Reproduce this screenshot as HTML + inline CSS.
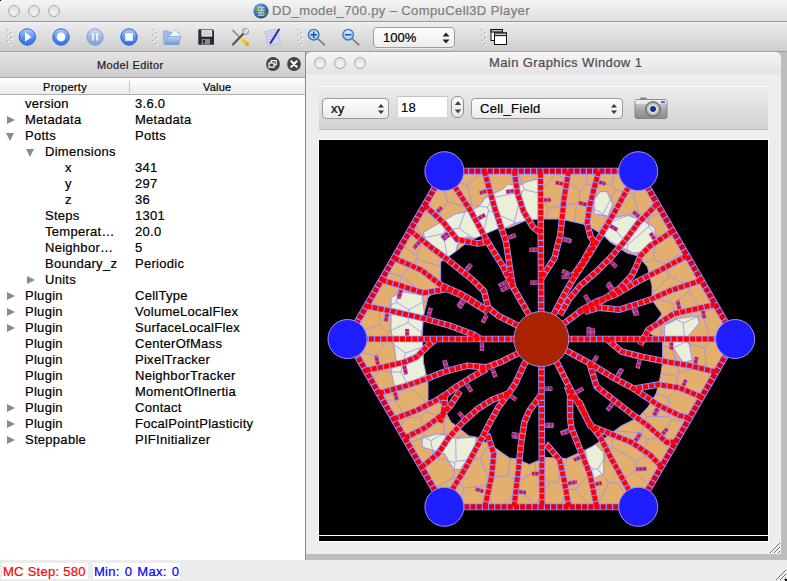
<!DOCTYPE html>
<html><head><meta charset="utf-8">
<style>
*{margin:0;padding:0;box-sizing:border-box}
html,body{width:787px;height:581px;overflow:hidden;background:#ececec;font-family:"Liberation Sans",sans-serif;position:relative}
.a{position:absolute}
.t{position:absolute;white-space:nowrap;font-size:13px;letter-spacing:0.28px;color:#000;line-height:16px;-webkit-text-stroke:0.2px currentColor}
#title{left:0;top:0;width:787px;height:22px;background:linear-gradient(#f4f4f4,#dedede);border-bottom:1px solid #989898}
.tl{position:absolute;width:12px;height:12px;border-radius:50%;border:1px solid #a9a9a9;background:radial-gradient(circle at 50% 70%,#f4f4f4,#dcdcdc)}
#tb{left:0;top:22px;width:787px;height:30px;background:linear-gradient(#ececec,#cdcdcd);border-top:1px solid #f4f4f4;border-bottom:1px solid #a0a0a0}
#dockh{left:0;top:52px;width:305px;height:26px;background:linear-gradient(#e5e5e5,#cdcdcd);border-bottom:1px solid #a8a8a8}
#colh{left:0;top:78px;width:305px;height:17px;background:linear-gradient(#ffffff,#ebebeb);border-bottom:1px solid #b0b0b0}
#tree{left:0;top:95px;width:305px;height:465px;background:#fff}
#vsep{left:305px;top:52px;width:1px;height:508px;background:#8a8a8a}
#mdi{left:306px;top:52px;width:481px;height:508px;background:#bdbdbd}
#sub{left:306px;top:52px;width:475px;height:502px;background:#ededed;border-radius:6px 6px 0 0}
#subt{left:0;top:0;width:475px;height:22px;background:linear-gradient(#f6f6f6,#e3e3e3);border-radius:6px 6px 0 0}
#panel{left:13px;top:34px;width:449px;height:44px;background:linear-gradient(#ececec,#d2d2d2);border-top:1px solid #fafafa;border-bottom:1px solid #bdbdbd}
#status{left:0;top:560px;width:787px;height:21px;background:#ececec}
.tri{position:absolute;width:0;height:0}
.tr{border-left:8px solid #8b8b8b;border-top:4.5px solid transparent;border-bottom:4.5px solid transparent}
.td{border-top:8px solid #8b8b8b;border-left:4.5px solid transparent;border-right:4.5px solid transparent}
</style></head><body>
<div id="title" class="a">
  <div class="tl" style="left:8px;top:5px"></div>
  <div class="tl" style="left:28px;top:5px"></div>
  <div class="tl" style="left:48px;top:5px"></div>
  <svg class="a" style="left:253px;top:3px" width="16" height="16" viewBox="0 0 16 16"><defs><radialGradient id="gg" cx="40%" cy="35%" r="70%"><stop offset="0" stop-color="#9fd0e8"/><stop offset="0.5" stop-color="#3f7fb0"/><stop offset="1" stop-color="#1d4a78"/></radialGradient></defs><circle cx="8" cy="8" r="7.6" fill="url(#gg)"/><path d="M3 5 q3 -2 5 0 q2 3 -1 5 q-3 1 -4 -2z M10 9 q3 -1 4 2 q-2 3 -4 1z" fill="#5a9a50" opacity="0.8"/><text x="8" y="8" font-size="5" fill="#fff" text-anchor="middle" font-family="Liberation Sans">CC</text><text x="8" y="13" font-size="5" fill="#fff" text-anchor="middle" font-family="Liberation Sans">3D</text></svg>
  <div class="t" style="left:272px;top:3px;color:#7b7b7b;letter-spacing:0.4px">DD_model_700.py – CompuCell3D Player</div>
</div>
<div id="tb" class="a"></div>
<!--TB-->
<svg class="a" style="left:0;top:22px" width="787" height="30" viewBox="0 22 787 30">
<defs>
<linearGradient id="gb" x1="0" y1="0" x2="0" y2="1"><stop offset="0" stop-color="#b8d2ff"/><stop offset="0.5" stop-color="#5a92f2"/><stop offset="1" stop-color="#2c6ee6"/></linearGradient>
<linearGradient id="gbr" x1="0" y1="0" x2="0" y2="1"><stop offset="0" stop-color="#6a9ee8"/><stop offset="1" stop-color="#2a5fc8"/></linearGradient>
<radialGradient id="gl" cx="50%" cy="40%" r="60%"><stop offset="0" stop-color="#e8fbff"/><stop offset="1" stop-color="#8cc4f0"/></radialGradient>
<linearGradient id="gf" x1="0" y1="0" x2="0" y2="1"><stop offset="0" stop-color="#bcd4f4"/><stop offset="1" stop-color="#6e9ad8"/></linearGradient>
<linearGradient id="gy" x1="0" y1="0" x2="1" y2="1"><stop offset="0" stop-color="#ffe070"/><stop offset="1" stop-color="#e0a800"/></linearGradient>
<g id="dots"><circle cx="0" cy="0" r="1.1"/><circle cx="3" cy="3" r="1.1"/><circle cx="0" cy="5.5" r="1.1"/><circle cx="3" cy="8.2" r="1.1"/><circle cx="0" cy="11" r="1.1"/><circle cx="3" cy="14" r="1.1"/></g>
</defs>
<g fill="#999">
<use href="#dots" x="8" y="30"/><use href="#dots" x="153.5" y="30"/><use href="#dots" x="298.6" y="30"/><use href="#dots" x="482" y="30"/>
</g>
<g fill="#f6f6f6">
<use href="#dots" x="8.6" y="30.6"/><use href="#dots" x="154.1" y="30.6"/><use href="#dots" x="299.2" y="30.6"/><use href="#dots" x="482.6" y="30.6"/>
</g>
<!-- play -->
<circle cx="27.3" cy="37" r="8.2" fill="url(#gb)" stroke="#2f63c8" stroke-width="1"/>
<path d="M25 32.2 L31.5 37 L25 41.8 Z" fill="#fff"/>
<!-- step -->
<circle cx="61" cy="37" r="8.2" fill="url(#gb)" stroke="#2f63c8" stroke-width="1"/>
<circle cx="61" cy="37" r="4.4" fill="#fff"/>
<!-- pause faded -->
<g opacity="0.5"><circle cx="95" cy="37" r="8.2" fill="url(#gb)" stroke="#2f63c8" stroke-width="1"/>
<rect x="91.8" y="33" width="2.3" height="7.5" fill="#fff"/><rect x="96" y="33" width="2.3" height="7.5" fill="#fff"/></g>
<!-- stop -->
<circle cx="129" cy="37" r="8.2" fill="url(#gb)" stroke="#2f63c8" stroke-width="1"/>
<rect x="125.2" y="33.2" width="7.6" height="7.6" fill="#fff"/>
<!-- folder -->
<path d="M163.5 31 h5 l1.5 1.5 h9 v11.5 h-15.5 z" fill="#9cbce8" stroke="#7f9fcf" stroke-width="0.6"/>
<path d="M168 38 l6 -8 l6.5 4.5 l-4 5 z" fill="#f4f4fa" stroke="#9aaad0" stroke-width="0.5"/>
<path d="M165 44.5 l2.6 -8 h13.2 l-2.5 8 z" fill="url(#gf)" stroke="#6b8fc8" stroke-width="0.6"/>
<!-- save -->
<path d="M198.3 29.2 h14.5 l1.2 1.2 v14.3 h-15.7 z" fill="#2b2b2b"/>
<rect x="201.4" y="29.8" width="10.8" height="6.8" fill="#dce6f0"/>
<line x1="202.5" y1="32" x2="211" y2="32" stroke="#9db2c8" stroke-width="0.8"/><line x1="202.5" y1="34.3" x2="211" y2="34.3" stroke="#9db2c8" stroke-width="0.8"/>
<rect x="201.8" y="39" width="8.2" height="5.4" fill="#8a8a8a"/><rect x="203" y="40" width="2" height="3.4" fill="#2b2b2b"/>
<!-- tools -->
<line x1="232.5" y1="30" x2="243" y2="40.5" stroke="#888" stroke-width="1.6"/>
<line x1="240" y1="37.5" x2="247.5" y2="44.5" stroke="url(#gy)" stroke-width="3.4" stroke-linecap="round"/>
<line x1="245" y1="32" x2="233" y2="44.5" stroke="#555" stroke-width="2.2" stroke-linecap="round"/>
<circle cx="245.5" cy="31.5" r="3" fill="#d8d8d8" stroke="#777" stroke-width="0.8"/>
<circle cx="246.8" cy="30.2" r="1.3" fill="#e8e8e8"/>
<!-- edit -->
<path d="M265 31.5 l12 -2.5 l3.4 14.5 l-12 2.4 z" fill="#d4d4f4" stroke="#a8a8d8" stroke-width="0.6"/>
<g stroke="#b0b0e0" stroke-width="0.5"><line x1="267" y1="34" x2="276" y2="32"/><line x1="267.7" y1="37" x2="277" y2="35"/><line x1="268.4" y1="40" x2="277.6" y2="38"/></g>
<line x1="279" y1="29.5" x2="270.5" y2="43" stroke="#2a2aa8" stroke-width="2" stroke-linecap="round"/>
<!-- zoom in -->
<line x1="317.5" y1="38.5" x2="324.4" y2="44.8" stroke="#777" stroke-width="1.6" stroke-linecap="round"/>
<circle cx="313.7" cy="34.7" r="5.3" fill="url(#gl)" stroke="#3a70c8" stroke-width="1.3"/>
<path d="M310.5 34.7 h6.4 M313.7 31.5 v6.4" stroke="#1b4fa8" stroke-width="1.6"/>
<!-- zoom out -->
<line x1="352" y1="38.5" x2="358.8" y2="44.8" stroke="#777" stroke-width="1.6" stroke-linecap="round"/>
<circle cx="348.2" cy="34.7" r="5.3" fill="url(#gl)" stroke="#3a70c8" stroke-width="1.3"/>
<path d="M345 34.7 h6.4" stroke="#1b4fa8" stroke-width="1.6"/>
<!-- windows -->
<rect x="491" y="29.5" width="11.5" height="11" fill="#fff" stroke="#111" stroke-width="1"/>
<rect x="491" y="29.5" width="11.5" height="2.5" fill="#bbb" stroke="#111" stroke-width="1"/>
<rect x="494.5" y="33" width="12" height="11.5" fill="#fff" stroke="#111" stroke-width="1"/>
<rect x="494.5" y="33" width="12" height="2.6" fill="#ccc" stroke="#111" stroke-width="1"/>
</svg>

<div class="a" style="left:373px;top:27px;width:82px;height:21px;border:1px solid #9c9c9c;border-radius:4px;background:linear-gradient(#fdfdfd,#ececec);box-shadow:0 1px 0 rgba(255,255,255,0.6)">
<div class="t" style="left:9px;top:2px;letter-spacing:0">100%</div>
<svg class="a" style="left:68px;top:4px" width="8" height="12" viewBox="0 0 8 12"><path d="M0.5 4.5 L4 0.5 L7.5 4.5Z M0.5 7.5 L4 11.5 L7.5 7.5Z" fill="#222"/></svg>
</div>
<!--/TB-->
<div id="dockh" class="a">
  <div class="t" style="left:97px;top:5px;font-size:11px;letter-spacing:0.4px;color:#1a1a1a">Model Editor</div>
  <svg class="a" style="left:265px;top:4px" width="38" height="16" viewBox="265 56 38 16"><circle cx="273" cy="64" r="6.9" fill="#444"/><circle cx="294" cy="64" r="6.9" fill="#444"/>
  <rect x="271.2" y="60.6" width="5" height="4.2" fill="none" stroke="#fff" stroke-width="1.2"/><rect x="269" y="63" width="5" height="4.2" fill="#444" stroke="#fff" stroke-width="1.2"/>
  <path d="M291.3 61.3 L296.7 66.7 M296.7 61.3 L291.3 66.7" stroke="#fff" stroke-width="2" stroke-linecap="round"/></svg>
</div>
<div id="colh" class="a">
  <div class="t" style="left:43px;top:1px;font-size:11px;letter-spacing:0.3px">Property</div>
  <div class="a" style="left:129px;top:3px;width:1px;height:12px;background:#c4c4c4"></div>
  <div class="t" style="left:203px;top:1px;font-size:11px;letter-spacing:0.2px">Value</div>
</div>
<div id="tree" class="a">
<div class="t" style="left:25px;top:1px">version</div>
<div class="t" style="left:135px;top:1px">3.6.0</div>
<div class="tri tr" style="left:7px;top:21px"></div>
<div class="t" style="left:25px;top:17px">Metadata</div>
<div class="t" style="left:135px;top:17px">Metadata</div>
<div class="tri td" style="left:6px;top:38px"></div>
<div class="t" style="left:25px;top:33px">Potts</div>
<div class="t" style="left:135px;top:33px">Potts</div>
<div class="tri td" style="left:26px;top:54px"></div>
<div class="t" style="left:45px;top:49px">Dimensions</div>
<div class="t" style="left:65px;top:65px">x</div>
<div class="t" style="left:135px;top:65px">341</div>
<div class="t" style="left:65px;top:81px">y</div>
<div class="t" style="left:135px;top:81px">297</div>
<div class="t" style="left:65px;top:97px">z</div>
<div class="t" style="left:135px;top:97px">36</div>
<div class="t" style="left:45px;top:113px">Steps</div>
<div class="t" style="left:135px;top:113px">1301</div>
<div class="t" style="left:45px;top:129px">Temperat…</div>
<div class="t" style="left:135px;top:129px">20.0</div>
<div class="t" style="left:45px;top:145px">Neighbor…</div>
<div class="t" style="left:135px;top:145px">5</div>
<div class="t" style="left:45px;top:161px">Boundary_z</div>
<div class="t" style="left:135px;top:161px">Periodic</div>
<div class="tri tr" style="left:27px;top:181px"></div>
<div class="t" style="left:45px;top:177px">Units</div>
<div class="tri tr" style="left:7px;top:197px"></div>
<div class="t" style="left:25px;top:193px">Plugin</div>
<div class="t" style="left:135px;top:193px">CellType</div>
<div class="tri tr" style="left:7px;top:213px"></div>
<div class="t" style="left:25px;top:209px">Plugin</div>
<div class="t" style="left:135px;top:209px">VolumeLocalFlex</div>
<div class="tri tr" style="left:7px;top:229px"></div>
<div class="t" style="left:25px;top:225px">Plugin</div>
<div class="t" style="left:135px;top:225px">SurfaceLocalFlex</div>
<div class="t" style="left:25px;top:241px">Plugin</div>
<div class="t" style="left:135px;top:241px">CenterOfMass</div>
<div class="t" style="left:25px;top:257px">Plugin</div>
<div class="t" style="left:135px;top:257px">PixelTracker</div>
<div class="t" style="left:25px;top:273px">Plugin</div>
<div class="t" style="left:135px;top:273px">NeighborTracker</div>
<div class="t" style="left:25px;top:289px">Plugin</div>
<div class="t" style="left:135px;top:289px">MomentOfInertia</div>
<div class="tri tr" style="left:7px;top:309px"></div>
<div class="t" style="left:25px;top:305px">Plugin</div>
<div class="t" style="left:135px;top:305px">Contact</div>
<div class="tri tr" style="left:7px;top:325px"></div>
<div class="t" style="left:25px;top:321px">Plugin</div>
<div class="t" style="left:135px;top:321px">FocalPointPlasticity</div>
<div class="tri tr" style="left:7px;top:341px"></div>
<div class="t" style="left:25px;top:337px">Steppable</div>
<div class="t" style="left:135px;top:337px">PIFInitializer</div>
</div>
<div id="mdi" class="a"></div>
<div id="vsep" class="a"></div>
<div id="sub" class="a">
  <div id="subt" class="a">
    <div class="tl" style="left:8px;top:5px"></div>
    <div class="tl" style="left:28px;top:5px"></div>
    <div class="tl" style="left:48px;top:5px"></div>
    <div class="t" style="left:183px;top:3px;color:#4a4a4a;letter-spacing:0.4px">Main Graphics Window 1</div>
  </div>
  <div id="panel" class="a"></div>
<div class="a" style="left:16px;top:46px;width:67px;height:21px;border:1px solid #9a9a9a;border-radius:4px;background:linear-gradient(#fdfdfd,#ebebeb)">
<div class="t" style="left:8px;top:2px">xy</div>
<svg class="a" style="left:54px;top:4px" width="8" height="12" viewBox="0 0 8 12"><path d="M1 4.5 L4 1 L7 4.5Z M1 7.5 L4 11 L7 7.5Z" fill="#333"/></svg></div>
<div class="a" style="left:91px;top:44px;width:51px;height:22px;background:#fff;border:1px solid #d8d8d8;border-top-color:#c4c4c4"><div class="t" style="left:3px;top:3px">18</div></div>
<div class="a" style="left:145px;top:44px;width:13px;height:22px;border:1px solid #8e8e8e;border-radius:6px;background:linear-gradient(#fbfbfb,#e6e6e6)">
<svg class="a" style="left:2px;top:3px" width="8" height="15" viewBox="0 0 8 15"><path d="M0.8 5 L4 1 L7.2 5Z M0.8 9.5 L4 13.5 L7.2 9.5Z" fill="#444"/></svg></div>
<div class="a" style="left:165px;top:46px;width:152px;height:21px;border:1px solid #9a9a9a;border-radius:4px;background:linear-gradient(#fdfdfd,#ebebeb)">
<div class="t" style="left:8px;top:2px">Cell_Field</div>
<svg class="a" style="left:138px;top:4px" width="8" height="12" viewBox="0 0 8 12"><path d="M1 4.5 L4 1 L7 4.5Z M1 7.5 L4 11 L7 7.5Z" fill="#333"/></svg></div>
<svg class="a" style="left:328px;top:44px" width="34" height="24" viewBox="0 0 34 24">
<defs><linearGradient id="cam" x1="0" y1="0" x2="0" y2="1"><stop offset="0" stop-color="#e0e0e0"/><stop offset="0.5" stop-color="#a8a8a8"/><stop offset="1" stop-color="#8a8a8a"/></linearGradient>
<radialGradient id="lens" cx="50%" cy="50%" r="50%"><stop offset="0" stop-color="#0a1a60"/><stop offset="0.35" stop-color="#2040a0"/><stop offset="0.45" stop-color="#e8e8e8"/><stop offset="0.8" stop-color="#b0b0b0"/><stop offset="1" stop-color="#606060"/></radialGradient></defs>
<rect x="6" y="1.5" width="7" height="3" rx="1" fill="#888"/>
<rect x="1" y="3.5" width="32" height="19" rx="2" fill="url(#cam)" stroke="#777" stroke-width="0.8"/>
<rect x="1.5" y="4" width="31" height="4" fill="#f4f4f4" opacity="0.7"/>
<circle cx="19" cy="13" r="7.5" fill="url(#lens)" stroke="#555" stroke-width="0.6"/>
<circle cx="19" cy="13" r="2" fill="#1a2d80"/>
<rect x="27" y="5" width="4" height="2.2" fill="#3a78e0"/>
</svg>
  <div class="a" style="left:12px;top:87px;width:451px;height:403px;background:#fff"></div>
  <div class="a" style="left:13px;top:88px;width:449px;height:395px;background:#000"></div>
  <div class="a" style="left:13px;top:484px;width:449px;height:5px;background:#000"></div>
</div>
<!--FIELD-->
<svg class="a" style="left:319px;top:140px" width="449" height="395" viewBox="319 140 449 395">
<rect x="319" y="140" width="449" height="395" fill="#000"/>
<polygon points="444.4,171.2 638.2,171.2 735.1,339.0 638.2,506.8 444.4,506.8 347.5,339.0" fill="#e2b06c" stroke="#a08cff" stroke-width="1"/>
<polygon points="423.5,232.2 439.5,223.0 455.5,213.9 466.9,211.6 478.4,207.0 485.2,197.9 503.5,188.7 508.1,184.1 517.2,186.4 526.4,181.9 540.1,178.4 541.0,179.6 541.0,219.0 537.8,220.7 526.4,220.7 515.0,223.0 505.8,227.6 494.4,234.5 478.4,239.0 466.9,236.8 457.8,243.6 455.5,252.8 448.6,257.3 425.7,246.0" fill="#eaf0d8" stroke="#a08cff" stroke-width="1"/>
<polygon points="594.1,199.8 599.9,191.7 606.9,191.7 612.7,204.5 608.0,216.1 594.1,213.8" fill="#eaf0d8" stroke="#a08cff" stroke-width="1"/>
<polygon points="603.4,234.7 612.7,218.4 626.6,214.9 642.9,220.7 654.5,227.7 656.8,241.6 647.5,250.9 633.6,253.2 624.3,248.6 610.4,241.6" fill="#eaf0d8" stroke="#a08cff" stroke-width="1"/>
<polygon points="391.0,297.5 402.6,291.7 422.3,295.2 424.6,315.0 421.2,335.8 423.7,341.4 423.7,355.2 425.4,362.1 426.3,377.6 406.5,384.5 394.4,386.2 391.0,370.7 396.1,360.4 394.4,348.3 391.0,330.0" fill="#eaf0d8" stroke="#a08cff" stroke-width="1"/>
<polygon points="664.4,325.4 678.4,318.4 697.0,316.1 699.3,323.0 687.7,337.0 692.3,360.2 683.0,362.5 673.7,348.6 664.4,339.3" fill="#eaf0d8" stroke="#a08cff" stroke-width="1"/>
<polygon points="422.2,438.2 437.9,433.7 458.0,438.2 475.9,437.0 475.9,447.1 460.3,469.5 453.6,469.5 444.6,453.8 422.2,447.1" fill="#eaf0d8" stroke="#a08cff" stroke-width="1"/>
<polygon points="585.1,448.1 594.4,443.5 603.7,452.8 603.7,473.7 594.4,478.3 587.4,464.4" fill="#eaf0d8" stroke="#a08cff" stroke-width="1"/>
<polygon points="440.7,262.0 455.0,252.0 469.0,241.0 487.6,233.0 499.0,228.0 508.5,228.0 524.7,221.0 538.7,219.0 561.0,219.0 587.0,225.0 603.0,235.0 610.0,242.0 627.0,253.0 638.0,256.0 647.5,267.0 652.0,286.0 652.0,300.0 662.0,314.0 648.0,332.0 662.6,342.0 662.6,362.0 660.5,376.0 656.4,393.0 648.0,407.0 638.0,417.6 621.0,426.0 605.0,438.0 592.0,446.5 585.0,450.0 566.5,458.6 545.6,457.4 529.4,464.4 515.4,458.6 509.5,458.0 493.8,447.0 476.0,437.0 469.0,436.0 455.0,425.0 451.0,422.0 440.7,403.0 428.0,401.0 428.0,383.0 423.5,362.5 422.3,334.7 423.5,316.0 428.0,297.5 440.7,287.0" fill="#000" stroke="#a08cff" stroke-width="1"/>
<path d="M463.9 488.2 L459.2 506.8M463.9 488.2 L453.8 477.3M453.8 477.3 L433.9 488.7M463.9 488.2 L485.1 485.8M485.1 485.8 L493.1 506.8M454.4 171.2 L456.1 181.1M434.9 187.7 L443.8 191.2M443.8 191.2 L456.1 181.1M653.4 259.3 L655.9 235.4M653.4 259.3 L665.7 263.9M665.7 263.9 L683.8 250.2M655.9 235.4 L677.1 238.5M632.1 506.8 L618.4 483.4M650.0 486.5 L634.4 471.4M634.4 471.4 L618.4 483.4M596.5 506.8 L608.8 482.2M618.4 483.4 L608.8 482.2M443.8 191.2 L447.9 201.8M421.1 211.5 L438.4 216.0M447.9 201.8 L438.4 216.0M471.8 204.5 L467.6 184.9M471.8 204.5 L487.2 207.4M493.1 197.6 L487.2 207.4M493.1 197.6 L488.6 171.2M483.4 171.2 L467.6 184.9M447.9 201.8 L466.5 207.2M466.5 207.2 L471.8 204.5M456.1 181.1 L467.6 184.9M545.5 219.0 L548.0 208.3M515.9 224.8 L514.2 221.7M514.2 221.7 L522.2 191.7M548.0 208.3 L539.0 193.1M539.0 193.1 L524.3 189.7M524.3 189.7 L522.2 191.7M488.6 210.4 L487.2 207.4M488.6 210.4 L514.2 221.7M493.1 197.6 L522.2 191.7M556.1 171.2 L556.2 173.5M517.5 171.2 L524.3 189.7M556.2 173.5 L539.0 193.1M587.4 171.2 L586.4 184.4M556.2 173.5 L580.0 190.9M586.4 184.4 L580.0 190.9M614.1 171.2 L612.0 184.1M586.4 184.4 L612.0 184.1M644.2 181.6 L633.4 194.3M633.4 194.3 L615.5 189.5M612.0 184.1 L615.5 189.5M609.2 222.6 L627.7 244.6M609.2 222.6 L637.9 211.7M627.7 244.6 L648.6 226.7M637.9 211.7 L648.1 219.1M648.1 219.1 L648.6 226.7M655.9 235.4 L648.6 226.7M644.0 263.0 L653.4 259.3M626.7 252.8 L627.7 244.6M661.0 210.7 L648.1 219.1M633.4 194.3 L637.9 211.7M371.5 380.6 L378.9 371.3M354.2 350.7 L374.6 355.3M378.9 371.3 L374.6 355.3M350.3 334.2 L379.9 324.7M388.6 340.6 L374.6 355.3M388.6 340.6 L387.2 332.3M379.9 324.7 L387.2 332.3M466.5 207.2 L459.2 228.2M438.4 216.0 L445.2 230.7M459.2 228.2 L445.2 230.7M488.6 210.4 L482.9 235.0M459.2 228.2 L474.0 238.9M480.8 458.2 L488.9 444.3M480.8 458.2 L488.4 478.3M488.4 478.3 L508.4 475.2M508.4 475.2 L510.2 458.1M485.1 485.8 L488.4 478.3M517.6 481.9 L518.0 489.5M500.3 506.8 L518.0 489.5M517.6 481.9 L508.4 475.2M702.3 314.5 L683.2 323.1M702.3 314.5 L711.7 339.8M683.2 323.1 L685.0 342.1M685.0 342.1 L704.6 348.4M711.7 339.8 L704.6 348.4M716.8 307.2 L702.9 312.8M733.3 335.8 L711.7 339.8M702.9 312.8 L702.3 314.5M690.5 285.9 L669.1 276.5M690.5 285.9 L689.6 291.3M689.6 291.3 L673.2 303.9M669.1 276.5 L652.0 293.8M652.0 296.8 L673.2 303.9M699.3 277.0 L690.5 285.9M665.7 263.9 L669.1 276.5M702.9 312.8 L689.6 291.3M675.4 318.7 L673.2 303.9M675.4 318.7 L683.2 323.1M517.6 481.9 L535.7 470.9M535.7 470.9 L535.4 461.8M565.6 489.5 L557.0 482.1M565.6 489.5 L561.4 506.8M535.9 506.8 L535.5 504.3M535.5 504.3 L549.6 482.3M557.0 482.1 L549.6 482.3M590.3 506.8 L575.6 489.7M575.6 489.7 L565.6 489.5M518.0 489.5 L535.5 504.3M535.7 470.9 L549.6 482.3M576.3 203.3 L579.2 200.8M576.3 203.3 L574.9 222.2M579.2 200.8 L603.0 214.0M598.3 232.0 L606.5 222.0M606.5 222.0 L603.0 214.0M548.0 208.3 L576.3 203.3M580.0 190.9 L579.2 200.8M615.5 189.5 L603.0 214.0M609.2 222.6 L606.5 222.0M675.4 318.7 L660.9 326.6M655.4 322.4 L660.9 326.6M465.3 433.1 L455.7 439.2M480.8 458.2 L456.1 461.4M455.7 439.2 L456.1 461.4M453.8 477.3 L454.6 462.7M421.4 467.0 L433.9 457.1M433.9 457.1 L454.6 462.7M454.6 462.7 L456.1 461.4M379.5 310.3 L396.4 302.4M379.5 310.3 L369.9 300.2M396.4 302.4 L400.8 276.1M386.1 272.1 L400.8 276.1M379.9 324.7 L379.5 310.3M387.2 332.3 L408.0 322.6M408.9 309.8 L396.4 302.4M408.0 322.6 L408.9 309.8M414.1 223.7 L424.0 237.9M445.2 230.7 L443.3 233.8M424.0 237.9 L443.3 233.8M402.1 244.3 L416.3 255.8M424.0 237.9 L416.3 255.8M679.1 372.8 L672.3 348.4M679.1 372.8 L676.8 376.3M676.8 376.3 L660.9 373.2M672.3 348.4 L662.6 346.0M705.8 364.7 L704.6 348.4M685.0 342.1 L672.3 348.4M705.8 364.7 L679.1 372.8M660.9 326.6 L661.0 340.9M705.8 364.7 L714.4 374.8M676.8 376.3 L677.7 388.5M677.7 388.5 L700.3 399.3M663.4 463.1 L643.9 456.5M634.4 471.4 L636.5 461.6M643.9 456.5 L636.5 461.6M557.0 482.1 L567.4 458.2M575.6 489.7 L593.4 468.8M574.6 454.8 L593.4 468.8M608.8 482.2 L597.5 469.0M636.5 461.6 L612.7 446.8M612.7 446.8 L597.5 469.0M597.5 469.0 L593.4 468.8M422.8 347.0 L405.5 353.2M426.2 374.8 L407.4 383.3M405.5 353.2 L400.8 372.2M400.8 372.2 L407.4 383.3M408.0 322.6 L422.4 333.1M388.6 340.6 L405.5 353.2M378.9 371.3 L400.8 372.2M383.4 401.3 L394.6 399.7M407.4 383.3 L407.2 385.3M394.6 399.7 L407.2 385.3M399.0 428.2 L406.2 417.7M394.6 399.7 L406.2 417.7M429.1 401.2 L426.9 402.9M407.2 385.3 L426.9 402.9M401.5 276.0 L428.3 297.3M401.5 276.0 L417.0 259.2M417.0 259.2 L440.7 266.6M400.8 276.1 L401.5 276.0M408.9 309.8 L427.4 299.8M416.3 255.8 L417.0 259.2M443.3 233.8 L447.2 257.4M672.1 448.1 L664.4 436.4M643.9 456.5 L646.8 439.8M646.8 439.8 L664.4 436.4M687.3 421.8 L671.7 419.6M664.4 436.4 L671.7 419.6M612.7 446.8 L611.2 433.3M646.8 439.8 L641.8 433.0M614.7 430.7 L641.8 433.0M420.7 417.0 L426.4 411.2M420.7 417.0 L424.4 437.2M426.4 411.2 L444.2 419.4M444.2 419.4 L444.2 432.8M444.2 432.8 L430.7 440.8M424.4 437.2 L430.7 440.8M406.2 417.7 L420.7 417.0M426.9 402.9 L426.4 411.2M407.7 443.3 L424.4 437.2M448.2 416.9 L444.2 419.4M455.7 439.2 L444.2 432.8M433.9 457.1 L430.7 440.8M668.5 397.7 L669.2 416.6M668.5 397.7 L655.7 394.2M669.2 416.6 L646.7 416.3M643.6 411.7 L646.7 416.3M677.7 388.5 L668.5 397.7M671.7 419.6 L669.2 416.6M641.8 433.0 L646.7 416.3" fill="none" stroke="#9c8cf4" stroke-width="0.8"/>
<g fill="none" stroke="#a08cff" stroke-width="6.6" stroke-linejoin="round"><polyline points="541.3,339.0 540.5,171.0"/><polyline points="541.3,339.0 542.0,506.8"/><polyline points="541.3,339.0 347.5,339.0"/><polyline points="541.3,339.0 735.1,339.0"/><polyline points="444.4,171.2 457.0,190.0 471.0,211.5 486.0,239.0 502.6,266.0 513.0,287.0 527.4,312.0 541.3,339.0"/><polyline points="638.2,171.2 626.6,190.5 615.0,211.4 601.1,234.7 587.1,257.9 573.2,278.8 563.9,295.0 555.0,312.0 541.3,339.0"/><polyline points="444.4,506.8 453.6,487.4 464.7,469.5 478.0,445.0 483.0,436.2 489.9,422.5 498.5,407.0 508.8,393.2 515.7,382.9 524.3,363.9 541.3,339.0"/><polyline points="638.2,506.8 609.3,455.0 601.0,438.3 588.7,421.8 578.3,403.2 570.1,388.7 557.7,363.9 541.3,339.0"/><polyline points="485.3,171.0 485.3,174.8 494.5,207.3 506.1,242.2 510.8,274.9 513.0,287.0"/><polyline points="514.3,171.0 517.4,192.9 523.6,211.5 532.9,227.0 540.7,233.0"/><polyline points="568.6,171.0 563.9,199.8 560.4,234.7 554.6,257.9 541.0,279.0"/><polyline points="598.8,171.0 594.1,188.2 589.5,206.8 587.1,223.0 590.6,236.9 594.1,241.6 582.5,262.5 573.0,276.0"/><polyline points="424.7,205.4 444.4,223.6 457.2,239.5 477.9,243.6 488.2,241.5"/><polyline points="410.1,230.5 430.4,246.8 449.0,260.7 473.7,280.8 484.0,291.1 488.2,307.6 498.5,315.9 515.0,324.2 541.3,339.0"/><polyline points="394.2,258.2 421.2,270.0 440.7,284.9 459.3,293.2 473.7,301.4 488.2,311.8"/><polyline points="657.1,204.0 638.2,223.0 624.3,241.6 610.4,257.9 596.4,271.8 580.2,285.7 568.6,299.9 560.0,315.0"/><polyline points="672.8,231.1 649.8,246.3 640.6,255.6 635.9,267.2 631.3,276.4 619.7,288.1 603.4,299.9 582.5,309.7 565.9,322.1 541.3,339.0"/><polyline points="687.1,255.8 661.4,269.5 638.2,281.1 615.0,295.0 596.9,301.4 578.3,311.8"/><polyline points="701.3,280.4 670.7,290.4 649.8,299.9 619.6,309.7 599.0,307.6 584.5,311.8"/><polyline points="715.5,304.5 694.6,309.2 673.7,313.8 648.2,330.0 640.0,345.0"/><polyline points="716.0,372.1 691.5,366.0 666.7,361.8 641.9,356.7 621.3,351.5 606.8,339.1"/><polyline points="701.5,397.0 679.1,387.7 658.5,384.6 633.7,388.7 611.0,376.3 590.7,363.9 568.0,351.5 541.3,339.0"/><polyline points="675.5,442.0 666.7,442.4 648.1,425.9 633.7,415.5 615.1,401.1 596.5,386.6 590.3,366.0 590.7,363.9"/><polyline points="689.4,418.0 679.1,415.5 658.5,405.2 633.7,388.7"/><polyline points="661.3,466.7 650.2,455.0 631.6,442.4 611.0,434.1 590.3,425.9 580.0,403.1 570.1,394.9"/><polyline points="381.6,279.9 423.5,292.9 446.9,289.0 461.3,295.2 477.9,305.6 488.2,311.8"/><polyline points="366.5,306.1 393.3,311.5 423.5,318.4 449.0,325.4 473.7,334.5 480.0,339.0"/><polyline points="365.7,370.4 385.8,366.4 404.8,362.1 416.8,356.9 428.8,344.9 435.7,339.5"/><polyline points="379.0,393.1 404.8,386.2 425.4,379.3 442.6,372.4 453.8,369.1 467.5,365.7 486.5,367.4 500.2,362.2 517.5,353.6 541.3,339.0"/><polyline points="393.7,419.1 416.8,410.3 434.0,401.7 445.2,394.9 457.2,386.3 471.0,377.7 486.5,369.1"/><polyline points="405.0,438.0 425.4,427.5 439.2,417.2 449.5,406.8 460.0,391.0"/><polyline points="445.2,394.9 443.4,413.8 440.0,422.5"/><polyline points="421.5,467.2 437.9,453.8 448.6,437.9 462.4,422.5 477.9,408.7 491.6,400.1 508.8,393.2"/><polyline points="484.9,506.8 491.6,476.2 493.8,453.8 487.1,433.7"/><polyline points="514.0,506.8 518.4,469.5 520.9,445.0 524.3,422.5 529.5,410.4 541.0,395.0"/><polyline points="568.8,506.8 564.2,480.6 559.5,459.7 545.6,443.5"/><polyline points="596.7,506.8 589.7,473.7 580.4,450.4 571.2,427.2 570.1,417.6 570.1,394.9 567.0,386.0"/><polyline points="444.4,171.2 638.2,171.2 735.1,339.0 638.2,506.8 444.4,506.8 347.5,339.0 444.4,171.2" stroke-width="7"/></g>
<polyline points="444.4,171.2 638.2,171.2 735.1,339.0 638.2,506.8 444.4,506.8 347.5,339.0 444.4,171.2" fill="none" stroke="#d8001e" stroke-width="5.2" stroke-dasharray="5 1.2"/>
<g fill="none" stroke="#ff0000" stroke-width="4.8" stroke-dasharray="5 1.2" stroke-linejoin="round"><polyline points="541.3,339.0 540.5,171.0"/><polyline points="541.3,339.0 542.0,506.8"/><polyline points="541.3,339.0 347.5,339.0"/><polyline points="541.3,339.0 735.1,339.0"/><polyline points="444.4,171.2 457.0,190.0 471.0,211.5 486.0,239.0 502.6,266.0 513.0,287.0 527.4,312.0 541.3,339.0"/><polyline points="638.2,171.2 626.6,190.5 615.0,211.4 601.1,234.7 587.1,257.9 573.2,278.8 563.9,295.0 555.0,312.0 541.3,339.0"/><polyline points="444.4,506.8 453.6,487.4 464.7,469.5 478.0,445.0 483.0,436.2 489.9,422.5 498.5,407.0 508.8,393.2 515.7,382.9 524.3,363.9 541.3,339.0"/><polyline points="638.2,506.8 609.3,455.0 601.0,438.3 588.7,421.8 578.3,403.2 570.1,388.7 557.7,363.9 541.3,339.0"/><polyline points="485.3,171.0 485.3,174.8 494.5,207.3 506.1,242.2 510.8,274.9 513.0,287.0"/><polyline points="514.3,171.0 517.4,192.9 523.6,211.5 532.9,227.0 540.7,233.0"/><polyline points="568.6,171.0 563.9,199.8 560.4,234.7 554.6,257.9 541.0,279.0"/><polyline points="598.8,171.0 594.1,188.2 589.5,206.8 587.1,223.0 590.6,236.9 594.1,241.6 582.5,262.5 573.0,276.0"/><polyline points="424.7,205.4 444.4,223.6 457.2,239.5 477.9,243.6 488.2,241.5"/><polyline points="410.1,230.5 430.4,246.8 449.0,260.7 473.7,280.8 484.0,291.1 488.2,307.6 498.5,315.9 515.0,324.2 541.3,339.0"/><polyline points="394.2,258.2 421.2,270.0 440.7,284.9 459.3,293.2 473.7,301.4 488.2,311.8"/><polyline points="657.1,204.0 638.2,223.0 624.3,241.6 610.4,257.9 596.4,271.8 580.2,285.7 568.6,299.9 560.0,315.0"/><polyline points="672.8,231.1 649.8,246.3 640.6,255.6 635.9,267.2 631.3,276.4 619.7,288.1 603.4,299.9 582.5,309.7 565.9,322.1 541.3,339.0"/><polyline points="687.1,255.8 661.4,269.5 638.2,281.1 615.0,295.0 596.9,301.4 578.3,311.8"/><polyline points="701.3,280.4 670.7,290.4 649.8,299.9 619.6,309.7 599.0,307.6 584.5,311.8"/><polyline points="715.5,304.5 694.6,309.2 673.7,313.8 648.2,330.0 640.0,345.0"/><polyline points="716.0,372.1 691.5,366.0 666.7,361.8 641.9,356.7 621.3,351.5 606.8,339.1"/><polyline points="701.5,397.0 679.1,387.7 658.5,384.6 633.7,388.7 611.0,376.3 590.7,363.9 568.0,351.5 541.3,339.0"/><polyline points="675.5,442.0 666.7,442.4 648.1,425.9 633.7,415.5 615.1,401.1 596.5,386.6 590.3,366.0 590.7,363.9"/><polyline points="689.4,418.0 679.1,415.5 658.5,405.2 633.7,388.7"/><polyline points="661.3,466.7 650.2,455.0 631.6,442.4 611.0,434.1 590.3,425.9 580.0,403.1 570.1,394.9"/><polyline points="381.6,279.9 423.5,292.9 446.9,289.0 461.3,295.2 477.9,305.6 488.2,311.8"/><polyline points="366.5,306.1 393.3,311.5 423.5,318.4 449.0,325.4 473.7,334.5 480.0,339.0"/><polyline points="365.7,370.4 385.8,366.4 404.8,362.1 416.8,356.9 428.8,344.9 435.7,339.5"/><polyline points="379.0,393.1 404.8,386.2 425.4,379.3 442.6,372.4 453.8,369.1 467.5,365.7 486.5,367.4 500.2,362.2 517.5,353.6 541.3,339.0"/><polyline points="393.7,419.1 416.8,410.3 434.0,401.7 445.2,394.9 457.2,386.3 471.0,377.7 486.5,369.1"/><polyline points="405.0,438.0 425.4,427.5 439.2,417.2 449.5,406.8 460.0,391.0"/><polyline points="445.2,394.9 443.4,413.8 440.0,422.5"/><polyline points="421.5,467.2 437.9,453.8 448.6,437.9 462.4,422.5 477.9,408.7 491.6,400.1 508.8,393.2"/><polyline points="484.9,506.8 491.6,476.2 493.8,453.8 487.1,433.7"/><polyline points="514.0,506.8 518.4,469.5 520.9,445.0 524.3,422.5 529.5,410.4 541.0,395.0"/><polyline points="568.8,506.8 564.2,480.6 559.5,459.7 545.6,443.5"/><polyline points="596.7,506.8 589.7,473.7 580.4,450.4 571.2,427.2 570.1,417.6 570.1,394.9 567.0,386.0"/></g>
<g fill="none" stroke-linecap="butt"><polyline points="486.3,191.1 479.8,193.0" stroke="#9a7ce0" stroke-width="4.4"/><polyline points="486.3,191.1 479.8,193.0" stroke="#c0185a" stroke-width="3.2" stroke-dasharray="3.2 0.8"/><polyline points="513.6,190.8 506.0,191.9" stroke="#9a7ce0" stroke-width="4.4"/><polyline points="513.6,190.8 506.0,191.9" stroke="#c0185a" stroke-width="3.2" stroke-dasharray="3.2 0.8"/><polyline points="478.7,218.3 485.0,214.9" stroke="#9a7ce0" stroke-width="4.4"/><polyline points="478.7,218.3 485.0,214.9" stroke="#c0185a" stroke-width="3.2" stroke-dasharray="3.2 0.8"/><polyline points="449.0,234.9 442.9,239.8" stroke="#9a7ce0" stroke-width="4.4"/><polyline points="449.0,234.9 442.9,239.8" stroke="#c0185a" stroke-width="3.2" stroke-dasharray="3.2 0.8"/><polyline points="508.3,237.6 515.7,235.1" stroke="#9a7ce0" stroke-width="4.4"/><polyline points="508.3,237.6 515.7,235.1" stroke="#c0185a" stroke-width="3.2" stroke-dasharray="3.2 0.8"/><polyline points="537.4,250.0 531.2,250.0" stroke="#9a7ce0" stroke-width="4.4"/><polyline points="537.4,250.0 531.2,250.0" stroke="#c0185a" stroke-width="3.2" stroke-dasharray="3.2 0.8"/><polyline points="437.4,211.7 441.6,207.4" stroke="#9a7ce0" stroke-width="4.4"/><polyline points="437.4,211.7 441.6,207.4" stroke="#c0185a" stroke-width="3.2" stroke-dasharray="3.2 0.8"/><polyline points="419.4,241.9 413.8,248.4" stroke="#9a7ce0" stroke-width="4.4"/><polyline points="419.4,241.9 413.8,248.4" stroke="#c0185a" stroke-width="3.2" stroke-dasharray="3.2 0.8"/><polyline points="544.1,200.0 550.9,200.0" stroke="#9a7ce0" stroke-width="4.4"/><polyline points="544.1,200.0 550.9,200.0" stroke="#c0185a" stroke-width="3.2" stroke-dasharray="3.2 0.8"/><polyline points="466.2,270.2 470.5,265.0" stroke="#9a7ce0" stroke-width="4.4"/><polyline points="466.2,270.2 470.5,265.0" stroke="#c0185a" stroke-width="3.2" stroke-dasharray="3.2 0.8"/><polyline points="508.9,286.6 500.8,290.6" stroke="#9a7ce0" stroke-width="4.4"/><polyline points="508.9,286.6 500.8,290.6" stroke="#c0185a" stroke-width="3.2" stroke-dasharray="3.2 0.8"/><polyline points="537.5,282.6 530.1,282.6" stroke="#9a7ce0" stroke-width="4.4"/><polyline points="537.5,282.6 530.1,282.6" stroke="#c0185a" stroke-width="3.2" stroke-dasharray="3.2 0.8"/><polyline points="569.8,274.5 562.2,270.8" stroke="#9a7ce0" stroke-width="4.4"/><polyline points="569.8,274.5 562.2,270.8" stroke="#c0185a" stroke-width="3.2" stroke-dasharray="3.2 0.8"/><polyline points="563.0,238.9 570.2,240.7" stroke="#9a7ce0" stroke-width="4.4"/><polyline points="563.0,238.9 570.2,240.7" stroke="#c0185a" stroke-width="3.2" stroke-dasharray="3.2 0.8"/><polyline points="612.7,288.9 608.1,282.4" stroke="#9a7ce0" stroke-width="4.4"/><polyline points="612.7,288.9 608.1,282.4" stroke="#c0185a" stroke-width="3.2" stroke-dasharray="3.2 0.8"/><polyline points="633.6,308.8 635.6,315.0" stroke="#9a7ce0" stroke-width="4.4"/><polyline points="633.6,308.8 635.6,315.0" stroke="#c0185a" stroke-width="3.2" stroke-dasharray="3.2 0.8"/><polyline points="588.9,301.9 585.0,295.0" stroke="#9a7ce0" stroke-width="4.4"/><polyline points="588.9,301.9 585.0,295.0" stroke="#c0185a" stroke-width="3.2" stroke-dasharray="3.2 0.8"/><polyline points="588.7,335.5 588.7,326.9" stroke="#9a7ce0" stroke-width="4.4"/><polyline points="588.7,335.5 588.7,326.9" stroke="#c0185a" stroke-width="3.2" stroke-dasharray="3.2 0.8"/><polyline points="462.3,299.9 458.3,306.4" stroke="#9a7ce0" stroke-width="4.4"/><polyline points="462.3,299.9 458.3,306.4" stroke="#c0185a" stroke-width="3.2" stroke-dasharray="3.2 0.8"/><polyline points="610.4,225.9 617.5,230.2" stroke="#9a7ce0" stroke-width="4.4"/><polyline points="610.4,225.9 617.5,230.2" stroke="#c0185a" stroke-width="3.2" stroke-dasharray="3.2 0.8"/><polyline points="639.0,216.7 632.9,211.5" stroke="#9a7ce0" stroke-width="4.4"/><polyline points="639.0,216.7 632.9,211.5" stroke="#c0185a" stroke-width="3.2" stroke-dasharray="3.2 0.8"/><polyline points="599.4,182.2 605.3,183.8" stroke="#9a7ce0" stroke-width="4.4"/><polyline points="599.4,182.2 605.3,183.8" stroke="#c0185a" stroke-width="3.2" stroke-dasharray="3.2 0.8"/><polyline points="586.4,204.6 578.4,202.6" stroke="#9a7ce0" stroke-width="4.4"/><polyline points="586.4,204.6 578.4,202.6" stroke="#c0185a" stroke-width="3.2" stroke-dasharray="3.2 0.8"/><polyline points="563.0,183.8 555.3,182.6" stroke="#9a7ce0" stroke-width="4.4"/><polyline points="563.0,183.8 555.3,182.6" stroke="#c0185a" stroke-width="3.2" stroke-dasharray="3.2 0.8"/><polyline points="593.7,361.6 597.3,355.7" stroke="#9a7ce0" stroke-width="4.4"/><polyline points="593.7,361.6 597.3,355.7" stroke="#c0185a" stroke-width="3.2" stroke-dasharray="3.2 0.8"/><polyline points="617.6,375.9 620.5,370.6" stroke="#9a7ce0" stroke-width="4.4"/><polyline points="617.6,375.9 620.5,370.6" stroke="#c0185a" stroke-width="3.2" stroke-dasharray="3.2 0.8"/><polyline points="612.6,403.6 607.3,410.4" stroke="#9a7ce0" stroke-width="4.4"/><polyline points="612.6,403.6 607.3,410.4" stroke="#c0185a" stroke-width="3.2" stroke-dasharray="3.2 0.8"/><polyline points="545.0,388.7 552.4,388.7" stroke="#9a7ce0" stroke-width="4.4"/><polyline points="545.0,388.7 552.4,388.7" stroke="#c0185a" stroke-width="3.2" stroke-dasharray="3.2 0.8"/><polyline points="545.2,425.9 553.3,425.9" stroke="#9a7ce0" stroke-width="4.4"/><polyline points="545.2,425.9 553.3,425.9" stroke="#c0185a" stroke-width="3.2" stroke-dasharray="3.2 0.8"/><polyline points="568.6,430.2 560.6,433.4" stroke="#9a7ce0" stroke-width="4.4"/><polyline points="568.6,430.2 560.6,433.4" stroke="#c0185a" stroke-width="3.2" stroke-dasharray="3.2 0.8"/><polyline points="576.2,392.3 583.2,388.3" stroke="#9a7ce0" stroke-width="4.4"/><polyline points="576.2,392.3 583.2,388.3" stroke="#c0185a" stroke-width="3.2" stroke-dasharray="3.2 0.8"/><polyline points="635.8,441.0 640.7,433.8" stroke="#9a7ce0" stroke-width="4.4"/><polyline points="635.8,441.0 640.7,433.8" stroke="#c0185a" stroke-width="3.2" stroke-dasharray="3.2 0.8"/><polyline points="658.1,408.9 654.8,415.3" stroke="#9a7ce0" stroke-width="4.4"/><polyline points="658.1,408.9 654.8,415.3" stroke="#c0185a" stroke-width="3.2" stroke-dasharray="3.2 0.8"/><polyline points="482.0,342.5 482.0,350.9" stroke="#9a7ce0" stroke-width="4.4"/><polyline points="482.0,342.5 482.0,350.9" stroke="#c0185a" stroke-width="3.2" stroke-dasharray="3.2 0.8"/><polyline points="446.5,367.6 444.4,360.6" stroke="#9a7ce0" stroke-width="4.4"/><polyline points="446.5,367.6 444.4,360.6" stroke="#c0185a" stroke-width="3.2" stroke-dasharray="3.2 0.8"/><polyline points="492.4,368.9 495.5,377.2" stroke="#9a7ce0" stroke-width="4.4"/><polyline points="492.4,368.9 495.5,377.2" stroke="#c0185a" stroke-width="3.2" stroke-dasharray="3.2 0.8"/><polyline points="466.9,384.4 471.5,391.7" stroke="#9a7ce0" stroke-width="4.4"/><polyline points="466.9,384.4 471.5,391.7" stroke="#c0185a" stroke-width="3.2" stroke-dasharray="3.2 0.8"/><polyline points="511.0,396.0 516.1,399.8" stroke="#9a7ce0" stroke-width="4.4"/><polyline points="511.0,396.0 516.1,399.8" stroke="#c0185a" stroke-width="3.2" stroke-dasharray="3.2 0.8"/><polyline points="463.1,417.2 458.8,412.4" stroke="#9a7ce0" stroke-width="4.4"/><polyline points="463.1,417.2 458.8,412.4" stroke="#c0185a" stroke-width="3.2" stroke-dasharray="3.2 0.8"/><polyline points="518.6,437.0 512.0,436.0" stroke="#9a7ce0" stroke-width="4.4"/><polyline points="518.6,437.0 512.0,436.0" stroke="#c0185a" stroke-width="3.2" stroke-dasharray="3.2 0.8"/><polyline points="562.9,239.2 571.5,241.4" stroke="#9a7ce0" stroke-width="4.4"/><polyline points="562.9,239.2 571.5,241.4" stroke="#c0185a" stroke-width="3.2" stroke-dasharray="3.2 0.8"/><polyline points="611.2,262.0 616.4,267.2" stroke="#9a7ce0" stroke-width="4.4"/><polyline points="611.2,262.0 616.4,267.2" stroke="#c0185a" stroke-width="3.2" stroke-dasharray="3.2 0.8"/><polyline points="569.5,276.3 561.7,277.1" stroke="#9a7ce0" stroke-width="4.4"/><polyline points="569.5,276.3 561.7,277.1" stroke="#c0185a" stroke-width="3.2" stroke-dasharray="3.2 0.8"/><polyline points="611.3,289.8 607.3,284.2" stroke="#9a7ce0" stroke-width="4.4"/><polyline points="611.3,289.8 607.3,284.2" stroke="#c0185a" stroke-width="3.2" stroke-dasharray="3.2 0.8"/><polyline points="635.1,308.4 637.4,315.5" stroke="#9a7ce0" stroke-width="4.4"/><polyline points="635.1,308.4 637.4,315.5" stroke="#c0185a" stroke-width="3.2" stroke-dasharray="3.2 0.8"/><polyline points="592.8,335.5 592.8,328.3" stroke="#9a7ce0" stroke-width="4.4"/><polyline points="592.8,335.5 592.8,328.3" stroke="#c0185a" stroke-width="3.2" stroke-dasharray="3.2 0.8"/><polyline points="654.4,239.0 650.5,233.1" stroke="#9a7ce0" stroke-width="4.4"/><polyline points="654.4,239.0 650.5,233.1" stroke="#c0185a" stroke-width="3.2" stroke-dasharray="3.2 0.8"/><polyline points="447.7,233.3 441.7,238.2" stroke="#9a7ce0" stroke-width="4.4"/><polyline points="447.7,233.3 441.7,238.2" stroke="#c0185a" stroke-width="3.2" stroke-dasharray="3.2 0.8"/><polyline points="466.3,270.3 471.2,264.3" stroke="#9a7ce0" stroke-width="4.4"/><polyline points="466.3,270.3 471.2,264.3" stroke="#c0185a" stroke-width="3.2" stroke-dasharray="3.2 0.8"/><polyline points="506.6,282.0 498.8,285.9" stroke="#9a7ce0" stroke-width="4.4"/><polyline points="506.6,282.0 498.8,285.9" stroke="#c0185a" stroke-width="3.2" stroke-dasharray="3.2 0.8"/><polyline points="537.4,249.8 529.3,249.8" stroke="#9a7ce0" stroke-width="4.4"/><polyline points="537.4,249.8 529.3,249.8" stroke="#c0185a" stroke-width="3.2" stroke-dasharray="3.2 0.8"/><polyline points="486.6,314.9 482.6,322.7" stroke="#9a7ce0" stroke-width="4.4"/><polyline points="486.6,314.9 482.6,322.7" stroke="#c0185a" stroke-width="3.2" stroke-dasharray="3.2 0.8"/><polyline points="428.5,316.2 430.8,307.9" stroke="#9a7ce0" stroke-width="4.4"/><polyline points="428.5,316.2 430.8,307.9" stroke="#c0185a" stroke-width="3.2" stroke-dasharray="3.2 0.8"/><polyline points="401.2,290.0 398.6,298.6" stroke="#9a7ce0" stroke-width="4.4"/><polyline points="401.2,290.0 398.6,298.6" stroke="#c0185a" stroke-width="3.2" stroke-dasharray="3.2 0.8"/><polyline points="387.1,313.9 385.7,321.8" stroke="#9a7ce0" stroke-width="4.4"/><polyline points="387.1,313.9 385.7,321.8" stroke="#c0185a" stroke-width="3.2" stroke-dasharray="3.2 0.8"/><polyline points="407.2,335.5 407.2,329.0" stroke="#9a7ce0" stroke-width="4.4"/><polyline points="407.2,335.5 407.2,329.0" stroke="#c0185a" stroke-width="3.2" stroke-dasharray="3.2 0.8"/><polyline points="463.8,300.9 459.3,308.2" stroke="#9a7ce0" stroke-width="4.4"/><polyline points="463.8,300.9 459.3,308.2" stroke="#c0185a" stroke-width="3.2" stroke-dasharray="3.2 0.8"/><polyline points="377.9,364.5 376.1,355.8" stroke="#9a7ce0" stroke-width="4.4"/><polyline points="377.9,364.5 376.1,355.8" stroke="#c0185a" stroke-width="3.2" stroke-dasharray="3.2 0.8"/><polyline points="404.2,365.8 406.1,374.3" stroke="#9a7ce0" stroke-width="4.4"/><polyline points="404.2,365.8 406.1,374.3" stroke="#c0185a" stroke-width="3.2" stroke-dasharray="3.2 0.8"/><polyline points="446.6,367.6 444.4,360.2" stroke="#9a7ce0" stroke-width="4.4"/><polyline points="446.6,367.6 444.4,360.2" stroke="#c0185a" stroke-width="3.2" stroke-dasharray="3.2 0.8"/><polyline points="394.9,392.5 397.0,400.3" stroke="#9a7ce0" stroke-width="4.4"/><polyline points="394.9,392.5 397.0,400.3" stroke="#c0185a" stroke-width="3.2" stroke-dasharray="3.2 0.8"/><polyline points="634.9,308.4 636.9,314.7" stroke="#9a7ce0" stroke-width="4.4"/><polyline points="634.9,308.4 636.9,314.7" stroke="#c0185a" stroke-width="3.2" stroke-dasharray="3.2 0.8"/><polyline points="679.4,309.0 677.6,300.7" stroke="#9a7ce0" stroke-width="4.4"/><polyline points="679.4,309.0 677.6,300.7" stroke="#c0185a" stroke-width="3.2" stroke-dasharray="3.2 0.8"/><polyline points="702.9,310.9 704.6,318.5" stroke="#9a7ce0" stroke-width="4.4"/><polyline points="702.9,310.9 704.6,318.5" stroke="#c0185a" stroke-width="3.2" stroke-dasharray="3.2 0.8"/><polyline points="671.4,342.5 671.4,349.4" stroke="#9a7ce0" stroke-width="4.4"/><polyline points="671.4,342.5 671.4,349.4" stroke="#c0185a" stroke-width="3.2" stroke-dasharray="3.2 0.8"/><polyline points="695.3,363.3 696.6,357.2" stroke="#9a7ce0" stroke-width="4.4"/><polyline points="695.3,363.3 696.6,357.2" stroke="#c0185a" stroke-width="3.2" stroke-dasharray="3.2 0.8"/><polyline points="617.9,376.1 622.1,368.6" stroke="#9a7ce0" stroke-width="4.4"/><polyline points="617.9,376.1 622.1,368.6" stroke="#c0185a" stroke-width="3.2" stroke-dasharray="3.2 0.8"/><polyline points="639.7,359.8 637.5,368.4" stroke="#9a7ce0" stroke-width="4.4"/><polyline points="639.7,359.8 637.5,368.4" stroke="#c0185a" stroke-width="3.2" stroke-dasharray="3.2 0.8"/><polyline points="683.4,385.7 685.8,379.9" stroke="#9a7ce0" stroke-width="4.4"/><polyline points="683.4,385.7 685.8,379.9" stroke="#c0185a" stroke-width="3.2" stroke-dasharray="3.2 0.8"/><polyline points="545.2,424.9 553.6,424.9" stroke="#9a7ce0" stroke-width="4.4"/><polyline points="545.2,424.9 553.6,424.9" stroke="#c0185a" stroke-width="3.2" stroke-dasharray="3.2 0.8"/><polyline points="518.9,435.1 511.7,434.0" stroke="#9a7ce0" stroke-width="4.4"/><polyline points="518.9,435.1 511.7,434.0" stroke="#c0185a" stroke-width="3.2" stroke-dasharray="3.2 0.8"/><polyline points="538.4,473.7 531.9,473.7" stroke="#9a7ce0" stroke-width="4.4"/><polyline points="538.4,473.7 531.9,473.7" stroke="#c0185a" stroke-width="3.2" stroke-dasharray="3.2 0.8"/><polyline points="519.2,491.8 526.0,492.6" stroke="#9a7ce0" stroke-width="4.4"/><polyline points="519.2,491.8 526.0,492.6" stroke="#c0185a" stroke-width="3.2" stroke-dasharray="3.2 0.8"/><polyline points="483.4,491.4 475.4,489.0" stroke="#9a7ce0" stroke-width="4.4"/><polyline points="483.4,491.4 475.4,489.0" stroke="#c0185a" stroke-width="3.2" stroke-dasharray="3.2 0.8"/><polyline points="568.3,483.5 576.8,481.9" stroke="#9a7ce0" stroke-width="4.4"/><polyline points="568.3,483.5 576.8,481.9" stroke="#c0185a" stroke-width="3.2" stroke-dasharray="3.2 0.8"/><polyline points="595.6,484.3 601.6,482.9" stroke="#9a7ce0" stroke-width="4.4"/><polyline points="595.6,484.3 601.6,482.9" stroke="#c0185a" stroke-width="3.2" stroke-dasharray="3.2 0.8"/><polyline points="568.9,430.9 561.6,433.8" stroke="#9a7ce0" stroke-width="4.4"/><polyline points="568.9,430.9 561.6,433.8" stroke="#c0185a" stroke-width="3.2" stroke-dasharray="3.2 0.8"/><polyline points="579.6,457.7 573.9,460.0" stroke="#9a7ce0" stroke-width="4.4"/><polyline points="579.6,457.7 573.9,460.0" stroke="#c0185a" stroke-width="3.2" stroke-dasharray="3.2 0.8"/><polyline points="657.4,408.6 653.7,415.8" stroke="#9a7ce0" stroke-width="4.4"/><polyline points="657.4,408.6 653.7,415.8" stroke="#c0185a" stroke-width="3.2" stroke-dasharray="3.2 0.8"/><polyline points="662.5,434.0 667.2,428.8" stroke="#9a7ce0" stroke-width="4.4"/><polyline points="662.5,434.0 667.2,428.8" stroke="#c0185a" stroke-width="3.2" stroke-dasharray="3.2 0.8"/><polyline points="635.3,440.7 640.2,433.5" stroke="#9a7ce0" stroke-width="4.4"/><polyline points="635.3,440.7 640.2,433.5" stroke="#c0185a" stroke-width="3.2" stroke-dasharray="3.2 0.8"/><polyline points="646.2,468.7 636.2,469.3" stroke="#9a7ce0" stroke-width="4.4"/><polyline points="646.2,468.7 636.2,469.3" stroke="#c0185a" stroke-width="3.2" stroke-dasharray="3.2 0.8"/></g>
<circle cx="444.4" cy="171.2" r="19.5" fill="#1e1eff" stroke="#a08cff" stroke-width="1"/>
<circle cx="638.2" cy="171.2" r="19.5" fill="#1e1eff" stroke="#a08cff" stroke-width="1"/>
<circle cx="735.1" cy="339.0" r="19.5" fill="#1e1eff" stroke="#a08cff" stroke-width="1"/>
<circle cx="638.2" cy="506.8" r="19.5" fill="#1e1eff" stroke="#a08cff" stroke-width="1"/>
<circle cx="444.4" cy="506.8" r="19.5" fill="#1e1eff" stroke="#a08cff" stroke-width="1"/>
<circle cx="347.5" cy="339.0" r="19.5" fill="#1e1eff" stroke="#a08cff" stroke-width="1"/>
<circle cx="541.3" cy="339" r="27.5" fill="#ab2200" stroke="#a08cff" stroke-width="1"/>
</svg>
<!--/FIELD-->
<div id="status" class="a">
  <div class="a" style="left:2px;top:3px;width:86px;height:16px;background:#fff"></div>
  <div class="t" style="left:3px;top:4px;color:#ff0000">MC Step: 580</div>
  <div class="a" style="left:93px;top:3px;width:87px;height:16px;background:#fff"></div>
  <div class="t" style="left:94px;top:4px;color:#0000ff;word-spacing:1.2px">Min: 0 Max: 0</div>
</div>
<svg class="a" style="left:760px;top:535px" width="27" height="46" viewBox="760 535 27 46">
<g stroke="#6e6e6e" stroke-width="1"><path d="M770 553 L780 543 M774 553 L780 547 M778 553 L780 551"/>
<path d="M776 580 L786 570 M780 580 L786 574 M784 580 L786 578"/></g>
<g stroke="#fafafa" stroke-width="1"><path d="M771 553 L780 544 M775 553 L780 548"/><path d="M777 580 L786 571 M781 580 L786 575"/></g>
</svg>
<div class="a" style="left:0;top:0;width:1px;height:1px;background:#000"></div>
<div class="a" style="left:785px;top:579px;width:2px;height:2px;background:#000"></div>
</body></html>
